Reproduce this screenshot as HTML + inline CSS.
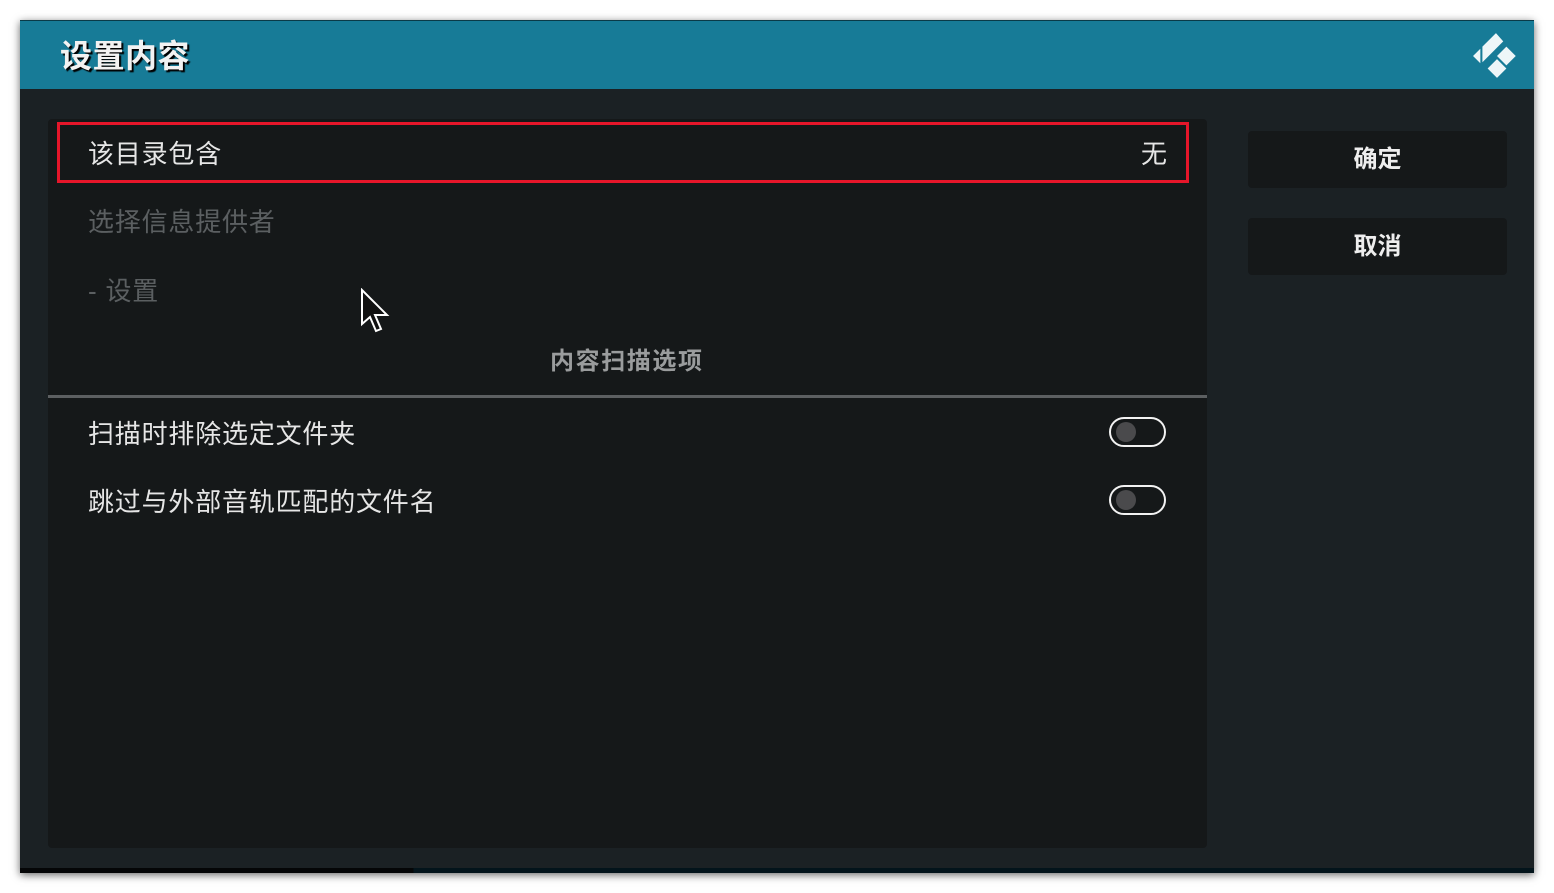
<!DOCTYPE html>
<html><head><meta charset="utf-8"><style>
body{margin:0;width:1554px;height:893px;background:#fff;position:relative;overflow:hidden;font-family:"Liberation Sans","Noto Sans CJK SC",sans-serif}
.win{position:absolute;left:20px;top:20px;width:1514px;height:853px;background:#1b2124;box-shadow:0 2px 8px rgba(0,0,0,.6)}
.hdr{position:absolute;left:0;top:0;width:1514px;height:68px;background:#177b97;border-top:1px solid #0a3a48}
.title{position:absolute;left:40px;top:10px;color:#f2f2f2;font-size:32px;font-weight:bold;text-shadow:2px 2px 1px #000;letter-spacing:0.5px}
.panel{position:absolute;left:28px;top:99px;width:1159px;height:729px;background:#151819;border-radius:4px}
.t{position:absolute;font-size:26px;letter-spacing:0.8px;color:#e6e6e6;white-space:nowrap}
.sel{position:absolute;left:9px;top:3px;width:1126px;height:55px;border:3px solid #e5162a}
.btn{position:absolute;left:1228px;width:259px;height:57px;background:#151819;border-radius:4px;color:#eee;font-size:24px;font-weight:bold;text-align:center;line-height:57px}
.tog{position:absolute;left:1061px;width:53px;height:26px;border:2.5px solid #f2f2f2;border-radius:16px}
.tog::after{content:"";position:absolute;left:5px;top:3px;width:20px;height:20px;border-radius:50%;background:#4a4a4c}
.bot{position:absolute;left:0;bottom:0;width:1514px;height:5px;background:linear-gradient(90deg,#050607 26%,#03141b 26%)}
</style></head><body>
<div class="win">
<div class="hdr"><div class="title">设置内容</div>
<svg style="position:absolute;left:1452px;top:10px" width="50" height="50" viewBox="0 0 48 48"><g fill="#eef6f8"><polygon points="1,24 8,17 8,31"/><polygon points="10,15 23,2 30,10 10,30"/><polygon points="24,24 33,15 42,24 33,33"/><polygon points="15,36 24,27 33,36 24,45"/></g></svg>
</div>
<div class="panel">
<div class="sel"></div>
<div class="t" style="left:40px;top:15px">该目录包含</div>
<div class="t" style="left:1093px;top:15px">无</div>
<div class="t" style="left:40px;top:83px;color:#5b5f61">选择信息提供者</div>
<div class="t" style="left:40px;top:152px;color:#5b5f61">- 设置</div>
<div class="t" style="left:502px;top:222px;font-size:24px;letter-spacing:1.6px;font-weight:bold;color:#9a9c9d">内容扫描选项</div>
<div style="position:absolute;left:0;top:276px;width:1159px;height:3px;background:#5c5f61"></div>
<div class="t" style="left:40px;top:295px">扫描时排除选定文件夹</div>
<div class="t" style="left:40px;top:363px">跳过与外部音轨匹配的文件名</div>
<div class="tog" style="top:298px"></div>
<div class="tog" style="top:366px"></div>
</div>
<div class="btn" style="top:111px">确定</div>
<div class="btn" style="top:198px">取消</div>
<div class="bot"></div>
</div>
<svg style="position:absolute;left:360px;top:288px" width="32" height="46" viewBox="0 0 32 46"><path d="M2 2 L2 36 L10 29 L16 43 L21 41 L15 27 L27 27 Z" fill="#111" stroke="#fff" stroke-width="2"/></svg>
</body></html>
